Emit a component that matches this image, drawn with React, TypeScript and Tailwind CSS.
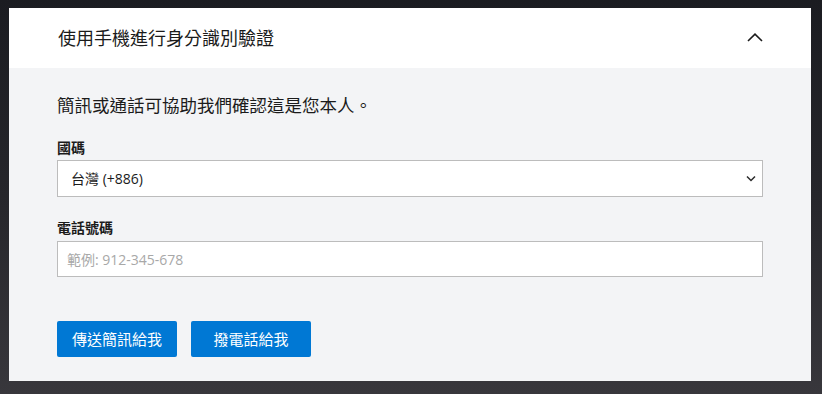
import React from "react";

export default function App() {
  const font = { fontFamily: '"Open Sans", "Noto Sans CJK TC", sans-serif' };
  return (
    <div
      className="w-[822px] h-[394px] bg-[linear-gradient(180deg,#1b1c21_0%,#26262b_50%,#38373c_100%)] pt-[8px] pl-[9px] overflow-hidden"
      style={font}
    >
      <div className="w-[802px] h-[373px] flex flex-col">
        <div className="h-[60px] bg-white flex items-center justify-between pl-[49px] pr-[48px]">
          <span className="text-[18px] leading-[24px] text-[#1b1b1b]">使用手機進行身分識別驗證</span>
          <svg width="16" height="9" viewBox="0 0 16 9" className="mt-[-2px]">
            <path d="M1 8 L8 1.2 L15 8" fill="none" stroke="#1b1b1b" strokeWidth="1.6" />
          </svg>
        </div>
        <div className="flex-1 bg-[#f3f4f6] px-[48px] pt-[24px]">
          <p className="text-[17.5px] leading-[26px] text-[#1b1b1b]">簡訊或通話可協助我們確認這是您本人。</p>
          <div className="mt-[20px] text-[14px] leading-[20px] font-semibold text-[#1b1b1b]">國碼</div>
          <div className="mt-[2px] h-[37px] bg-white border border-[#bcbcbc] flex items-center justify-between pl-[13px] pr-[6px]">
            <span className="text-[14px] text-[#1b1b1b]">台灣 (+886)</span>
            <svg width="10" height="7" viewBox="0 0 10 7">
              <path d="M1 1.5 L5 5.5 L9 1.5" fill="none" stroke="#2b2b2b" strokeWidth="1.5" />
            </svg>
          </div>
          <div className="mt-[21px] text-[14px] leading-[20px] font-semibold text-[#1b1b1b]">電話號碼</div>
          <input
            className="mt-[3px] w-full h-[36px] bg-white border border-[#bcbcbc] px-[9px] text-[14px] text-[#1b1b1b] placeholder:text-[#a8a8a8] outline-none"
            placeholder="範例: 912-345-678"
            style={font}
          />
          <div className="mt-[44px] flex gap-[14px]">
            <button className="w-[120px] h-[36px] rounded-[2px] bg-[#0078d4] text-white text-[15px]" style={font}>
              傳送簡訊給我
            </button>
            <button className="w-[120px] h-[36px] rounded-[2px] bg-[#0078d4] text-white text-[15px]" style={font}>
              撥電話給我
            </button>
          </div>
        </div>
      </div>
    </div>
  );
}
